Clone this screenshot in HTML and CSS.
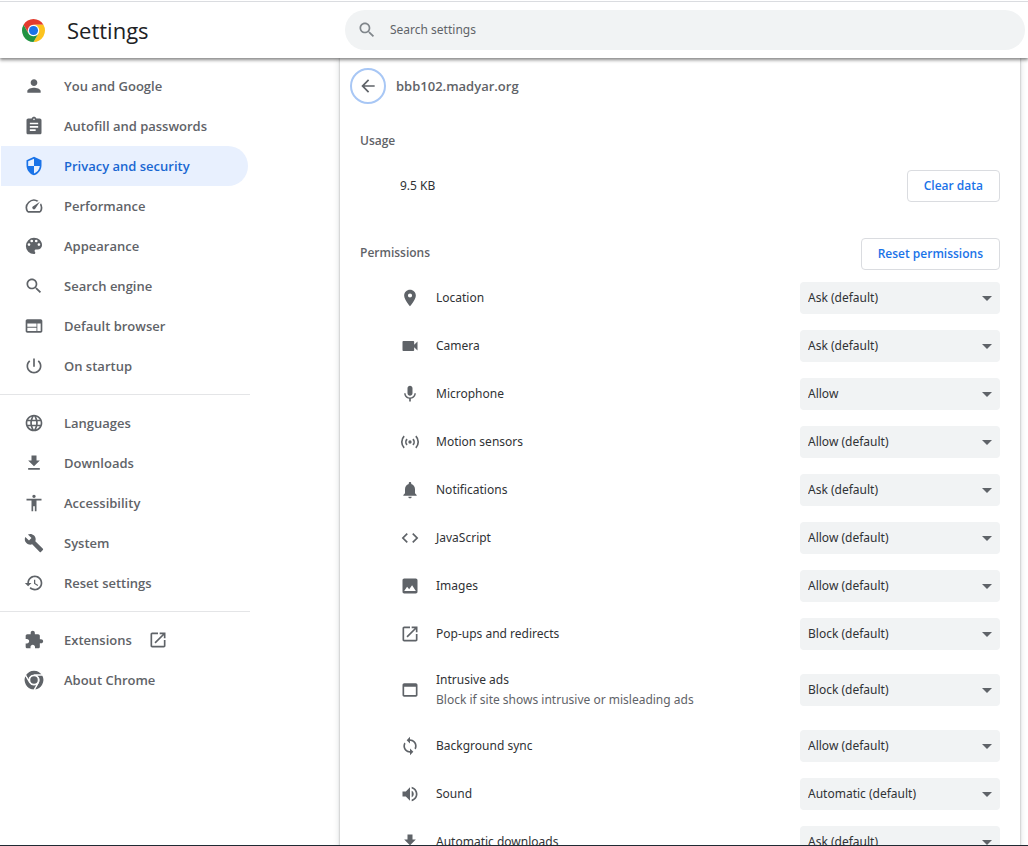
FILE: index.html
```html
<!DOCTYPE html>
<html lang="en">
<head>
<meta charset="utf-8">
<meta name="viewport" content="width=device-width, initial-scale=1">
<title>Settings</title>
<link rel="stylesheet" href="styles.css">
</head>
<body>
<svg class="sprite" aria-hidden="true">
  <symbol id="person" viewBox="0 0 24 24"><path d="M12 12c2.21 0 4-1.79 4-4s-1.79-4-4-4-4 1.79-4 4 1.79 4 4 4zm0 2c-2.67 0-8 1.34-8 4v2h16v-2c0-2.66-5.33-4-8-4z"/></symbol>
  <symbol id="clipboard" viewBox="0 0 24 24"><path d="M19 3h-4.18C14.4 1.84 13.3 1 12 1c-1.3 0-2.4.84-2.82 2H5c-1.1 0-2 .9-2 2v15c0 1.1.9 2 2 2h14c1.1 0 2-.9 2-2V5c0-1.1-.9-2-2-2zm-7 0c.55 0 1 .45 1 1s-.45 1-1 1-1-.45-1-1 .45-1 1-1zm2 15H7v-2h7v2zm3-4H7v-2h10v2zm0-4H7V8h10v2z"/></symbol>
  <symbol id="shield" viewBox="0 0 24 24"><path d="M12 1L3 5v6c0 5.55 3.84 10.74 9 12 5.16-1.26 9-6.45 9-12V5l-9-4zm0 10.99h7c-.53 4.12-3.28 7.79-7 8.94V12H5V6.3l7-3.11v8.8z"/></symbol>
  <symbol id="speed" viewBox="0 0 24 24"><path d="M20.38 8.57l-1.23 1.85a8 8 0 0 1-.22 7.58H5.07A8 8 0 0 1 15.58 6.85l1.85-1.23A10 10 0 0 0 3.35 19a2 2 0 0 0 1.72 1h13.85a2 2 0 0 0 1.74-1 10 10 0 0 0-.27-10.44zm-9.79 6.84a2 2 0 0 0 2.83 0l5.66-8.49-8.49 5.66a2 2 0 0 0 0 2.83z"/></symbol>
  <symbol id="palette" viewBox="0 0 24 24"><path d="M12 3c5 0 9 3.600 9 8 0 2.760-2.240 5-5 5h-1.800c-.800 0-1.500.700-1.500 1.500 0 .400.200.800.500 1.100.200.300.300.600.300 1 0 .800-.700 1.400-1.500 1.400a9 9 0 0 1 0-18zm-5.500 9a1.500 1.500 0 1 0 0-3 1.500 1.500 0 0 0 0 3zm3-4a1.500 1.500 0 1 0 0-3 1.500 1.500 0 0 0 0 3zm5 0a1.500 1.500 0 1 0 0-3 1.500 1.500 0 0 0 0 3zm3 4a1.500 1.500 0 1 0 0-3 1.500 1.500 0 0 0 0 3z" transform="translate(-1 -1) scale(1.08)"/></symbol>
  <symbol id="search" viewBox="0 0 24 24"><path d="M15.5 14h-.79l-.28-.27C15.41 12.59 16 11.11 16 9.5 16 5.91 13.09 3 9.5 3S3 5.91 3 9.5 5.91 16 9.5 16c1.61 0 3.09-.59 4.23-1.57l.27.28v.79l5 4.99L20.49 19l-4.99-5zm-6 0C7.01 14 5 11.99 5 9.5S7.01 5 9.5 5 14 7.01 14 9.5 11.99 14 9.5 14z"/></symbol>
  <symbol id="browser" viewBox="0 0 24 24"><path d="M20 4H4c-1.1 0-1.99.9-1.99 2L2 18c0 1.1.9 2 2 2h16c1.1 0 2-.9 2-2V6c0-1.1-.9-2-2-2zm-5 14H4v-4h11v4zm0-5H4V9h11v4zm5 5h-4V9h4v9z"/></symbol>
  <symbol id="power" viewBox="0 0 24 24"><path d="M13 3h-2v10h2V3zm4.83 2.17l-1.42 1.42C17.99 7.86 19 9.81 19 12c0 3.87-3.13 7-7 7s-7-3.13-7-7c0-2.19 1.01-4.14 2.58-5.42L6.170 5.17C4.23 6.82 3 9.26 3 12c0 4.97 4.03 9 9 9s9-4.03 9-9c0-2.74-1.23-5.18-3.17-6.83z"/></symbol>
  <symbol id="globe" viewBox="0 0 24 24"><path d="M11.99 2C6.47 2 2 6.48 2 12s4.47 10 9.99 10C17.52 22 22 17.52 22 12S17.52 2 11.99 2zm6.930 6h-2.950c-.32-1.250-.78-2.450-1.380-3.560 1.840.63 3.370 1.910 4.330 3.560zM12 4.040c.83 1.200 1.480 2.530 1.910 3.960h-3.820c.43-1.430 1.080-2.760 1.910-3.960zM4.260 14C4.100 13.360 4 12.690 4 12s.1-1.360.26-2h3.380c-.08.66-.14 1.320-.14 2s.06 1.340.14 2H4.260zm.82 2h2.950c.32 1.250.78 2.450 1.380 3.560-1.840-.63-3.370-1.900-4.330-3.560zm2.950-8H5.080c.96-1.660 2.490-2.930 4.330-3.560C8.810 5.550 8.350 6.750 8.030 8zM12 19.960c-.83-1.200-1.480-2.530-1.910-3.960h3.820c-.43 1.430-1.080 2.760-1.910 3.960zM14.340 14H9.660c-.09-.66-.16-1.320-.16-2s.07-1.350.16-2h4.680c.09.65.16 1.320.16 2s-.07 1.340-.16 2zm.25 5.560c.6-1.110 1.060-2.310 1.380-3.560h2.950c-.96 1.650-2.490 2.930-4.330 3.560zM16.360 14c.08-.66.14-1.320.14-2s-.06-1.340-.14-2h3.380c.16.64.26 1.310.26 2s-.1 1.360-.26 2h-3.380z"/></symbol>
  <symbol id="download" viewBox="0 0 24 24"><path d="M19 9h-4V3H9v6H5l7 7 7-7zM5 18v2h14v-2H5z"/></symbol>
  <symbol id="accessibility" viewBox="0 0 24 24"><path d="M12 2c1.100 0 2 .9 2 2s-.9 2-2 2-2-.9-2-2 .9-2 2-2zm9 7h-6v13h-2v-6h-2v6H9V9H3V7h18v2z"/></symbol>
  <symbol id="wrench" viewBox="0 0 24 24"><path d="M22.700 19l-9.100-9.100c.9-2.300.4-5-1.500-6.900-2-2-5-2.400-7.400-1.300L9 6 6 9 1.600 4.700C.4 7.100.9 10.100 2.900 12.100c1.900 1.900 4.600 2.400 6.900 1.500l9.100 9.100c.4.4 1 .4 1.400 0l2.300-2.300c.5-.4.5-1.100.1-1.400z"/></symbol>
  <symbol id="history" viewBox="0 0 24 24"><path d="M13 3c-4.970 0-9 4.030-9 9H1l3.890 3.890.07.14L9 12H6c0-3.870 3.130-7 7-7s7 3.130 7 7-3.130 7-7 7c-1.930 0-3.680-.79-4.940-2.060l-1.420 1.420C8.270 19.990 10.510 21 13 21c4.970 0 9-4.030 9-9s-4.030-9-9-9zm-1 5v5l4.280 2.540.72-1.210-3.500-2.080V8H12z"/></symbol>
  <symbol id="puzzle" viewBox="0 0 24 24"><path d="M20.500 11H19V7c0-1.100-.9-2-2-2h-4V3.500C13 2.120 11.880 1 10.500 1S8 2.120 8 3.500V5H4c-1.100 0-1.990.9-1.990 2v3.800H3.500c1.490 0 2.700 1.210 2.700 2.700s-1.210 2.700-2.700 2.700H2V20c0 1.100.9 2 2 2h3.800v-1.500c0-1.490 1.210-2.700 2.700-2.700 1.490 0 2.700 1.210 2.700 2.700V22H17c1.100 0 2-.9 2-2v-4h1.500c1.380 0 2.500-1.120 2.500-2.500S21.880 11 20.500 11z"/></symbol>
  <symbol id="open" viewBox="0 0 24 24"><path d="M19 19H5V5h7V3H5c-1.110 0-2 .9-2 2v14c0 1.100.89 2 2 2h14c1.100 0 2-.9 2-2v-7h-2v7zM14 3v2h3.590l-9.830 9.830 1.410 1.410L19 6.410V10h2V3h-7z"/></symbol>
  <symbol id="chrome" viewBox="0 0 48 48"><g stroke="#fff" stroke-width="3"><path d="M24 12h20.780a24 24 0 0 0-41.560 0L13.610 30A12 12 0 0 1 24 12z"/><path d="M34.390 30 24 48A24 24 0 0 0 44.780 12H24a12 12 0 0 1 10.390 18z"/><path d="M13.610 30 3.220 12A24 24 0 0 0 24 48l10.390-18a12 12 0 0 1-20.780 0z"/></g><circle cx="24" cy="24" r="9"/></symbol>
  <symbol id="pin" viewBox="0 0 24 24"><path d="M12 2C8.130 2 5 5.130 5 9c0 5.250 7 13 7 13s7-7.750 7-13c0-3.870-3.130-7-7-7zm0 9.500a2.500 2.500 0 0 1 0-5 2.500 2.500 0 0 1 0 5z"/></symbol>
  <symbol id="camera" viewBox="0 0 24 24"><path d="M17 10.500V7c0-.55-.45-1-1-1H4c-.55 0-1 .45-1 1v10c0 .55.45 1 1 1h12c.55 0 1-.45 1-1v-3.500l4 4v-11l-4 4z"/></symbol>
  <symbol id="mic" viewBox="0 0 24 24"><path d="M12 14c1.660 0 2.990-1.340 2.990-3L15 5c0-1.660-1.340-3-3-3S9 3.340 9 5v6c0 1.660 1.340 3 3 3zm5.300-3c0 3-2.540 5.100-5.300 5.100S6.700 14 6.700 11H5c0 3.410 2.720 6.230 6 6.720V21h2v-3.280c3.280-.48 6-3.300 6-6.720h-1.700z"/></symbol>
  <symbol id="sensors" viewBox="0 0 24 24"><circle cx="12" cy="12" r="2"/><path fill="none" stroke="currentColor" stroke-width="2" d="M8.500 8.500a5 5 0 0 0 0 7M15.500 8.500a5 5 0 0 1 0 7M5 5a10 10 0 0 0 0 14M19 5a10 10 0 0 1 0 14"/></symbol>
  <symbol id="bell" viewBox="0 0 24 24"><path d="M12 22c1.100 0 2-.9 2-2h-4c0 1.100.89 2 2 2zm6-6v-5c0-3.070-1.640-5.640-4.500-6.320V4c0-.83-.67-1.500-1.500-1.500s-1.500.67-1.500 1.500v.68C7.630 5.360 6 7.920 6 11v5l-2 2v1h16v-1l-2-2z"/></symbol>
  <symbol id="code" viewBox="0 0 24 24"><path d="M9.400 16.600L4.800 12l4.600-4.600L8 6l-6 6 6 6 1.400-1.400zm5.200 0l4.600-4.600-4.600-4.600L16 6l6 6-6 6-1.400-1.400z"/></symbol>
  <symbol id="image" viewBox="0 0 24 24"><path d="M21 19V5c0-1.100-.9-2-2-2H5c-1.100 0-2 .9-2 2v14c0 1.100.9 2 2 2h14c1.100 0 2-.9 2-2zM5 18l3.500-5 2.500 3 3.500-5 4.500 7z"/></symbol>
  <symbol id="window" viewBox="0 0 24 24"><path d="M19 4H5c-1.110 0-2 .9-2 2v12c0 1.100.89 2 2 2h14c1.100 0 2-.9 2-2V6c0-1.100-.9-2-2-2zm0 14H5V8h14v10z"/></symbol>
  <symbol id="sync" viewBox="0 0 24 24"><path d="M12 4V1L8 5l4 4V6c3.310 0 6 2.690 6 6 0 1.010-.25 1.970-.7 2.800l1.460 1.460C19.540 15.030 20 13.570 20 12c0-4.420-3.580-8-8-8zm0 14c-3.310 0-6-2.690-6-6 0-1.010.25-1.970.7-2.800L5.240 7.740C4.460 8.970 4 10.430 4 12c0 4.420 3.580 8 8 8v3l4-4-4-4v3z"/></symbol>
  <symbol id="sound" viewBox="0 0 24 24"><path d="M3 9v6h4l5 5V4L7 9H3zm13.500 3c0-1.770-1.020-3.290-2.500-4.030v8.050c1.480-.73 2.500-2.250 2.500-4.020zM14 3.230v2.060c2.890.86 5 3.540 5 6.710s-2.110 5.850-5 6.710v2.060c4.010-.91 7-4.490 7-8.770s-2.990-7.860-7-8.770z"/></symbol>
  <symbol id="back" viewBox="0 0 24 24"><path d="M20 11H7.830l5.590-5.590L12 4l-8 8 8 8 1.410-1.410L7.830 13H20v-2z"/></symbol>
  <symbol id="arrow" viewBox="0 0 10 5"><path d="M0 0h10L5 5z"/></symbol>
</svg>

<header class="toolbar">
  <div class="brand">
    <svg class="logo" viewBox="0 0 48 48" aria-hidden="true"><circle cx="24" cy="24" r="13" fill="#fff"/><path fill="#e33b2e" d="M24 12h20.780a24 24 0 0 0-41.560 0L13.610 30A12 12 0 0 1 24 12z"/><path fill="#fcc31e" d="M34.390 30 24 48A24 24 0 0 0 44.780 12H24a12 12 0 0 1 10.390 18z"/><path fill="#229342" d="M13.610 30 3.220 12A24 24 0 0 0 24 48l10.390-18a12 12 0 0 1-20.780 0z"/><circle cx="24" cy="24" r="9.500" fill="#1a73e8"/></svg>
    <h1 class="title">Settings</h1>
  </div>
  <label class="search">
    <svg class="icon"><use href="#search"/></svg>
    <input class="search-input" type="search" placeholder="Search settings" aria-label="Search settings">
  </label>
</header>

<div class="page">
  <nav class="menu" aria-label="Settings sections">
    <a class="menu-item" href="#people"><svg class="icon"><use href="#person"/></svg>You and Google</a>
    <a class="menu-item" href="#autofill"><svg class="icon"><use href="#clipboard"/></svg>Autofill and passwords</a>
    <a class="menu-item selected" href="#privacy" aria-current="page"><svg class="icon"><use href="#shield"/></svg>Privacy and security</a>
    <a class="menu-item" href="#performance"><svg class="icon"><use href="#speed"/></svg>Performance</a>
    <a class="menu-item" href="#appearance"><svg class="icon"><use href="#palette"/></svg>Appearance</a>
    <a class="menu-item" href="#engine"><svg class="icon"><use href="#search"/></svg>Search engine</a>
    <a class="menu-item" href="#default"><svg class="icon"><use href="#browser"/></svg>Default browser</a>
    <a class="menu-item" href="#startup"><svg class="icon"><use href="#power"/></svg>On startup</a>
    <hr class="divider">
    <a class="menu-item" href="#languages"><svg class="icon"><use href="#globe"/></svg>Languages</a>
    <a class="menu-item" href="#downloads"><svg class="icon"><use href="#download"/></svg>Downloads</a>
    <a class="menu-item" href="#a11y"><svg class="icon"><use href="#accessibility"/></svg>Accessibility</a>
    <a class="menu-item" href="#system"><svg class="icon"><use href="#wrench"/></svg>System</a>
    <a class="menu-item" href="#reset"><svg class="icon"><use href="#history"/></svg>Reset settings</a>
    <hr class="divider">
    <a class="menu-item" href="#extensions"><svg class="icon"><use href="#puzzle"/></svg>Extensions<svg class="icon external"><use href="#open"/></svg></a>
    <a class="menu-item" href="#about"><svg class="icon"><use href="#chrome"/></svg>About Chrome</a>
  </nav>

  <main class="card">
    <div class="site">
      <button class="back" type="button" aria-label="Back"><svg class="icon"><use href="#back"/></svg></button>
      <h2 class="site-name">bbb102.madyar.org</h2>
    </div>
    <h3 class="section-title usage-title">Usage</h3>
    <div class="usage"><span>9.5 KB</span><button class="button" type="button">Clear data</button></div>
    <div class="permissions-head"><h3 class="section-title">Permissions</h3><button class="button" type="button">Reset permissions</button></div>

    <div class="row"><svg class="icon"><use href="#pin"/></svg><label class="name" for="p1">Location</label><span class="picker"><select class="select" id="p1"><option>Ask (default)</option></select><svg class="arrow"><use href="#arrow"/></svg></span></div>
    <div class="row"><svg class="icon"><use href="#camera"/></svg><label class="name" for="p2">Camera</label><span class="picker"><select class="select" id="p2"><option>Ask (default)</option></select><svg class="arrow"><use href="#arrow"/></svg></span></div>
    <div class="row"><svg class="icon"><use href="#mic"/></svg><label class="name" for="p3">Microphone</label><span class="picker"><select class="select" id="p3"><option>Allow</option></select><svg class="arrow"><use href="#arrow"/></svg></span></div>
    <div class="row"><svg class="icon"><use href="#sensors"/></svg><label class="name" for="p4">Motion sensors</label><span class="picker"><select class="select" id="p4"><option>Allow (default)</option></select><svg class="arrow"><use href="#arrow"/></svg></span></div>
    <div class="row"><svg class="icon"><use href="#bell"/></svg><label class="name" for="p5">Notifications</label><span class="picker"><select class="select" id="p5"><option>Ask (default)</option></select><svg class="arrow"><use href="#arrow"/></svg></span></div>
    <div class="row"><svg class="icon"><use href="#code"/></svg><label class="name" for="p6">JavaScript</label><span class="picker"><select class="select" id="p6"><option>Allow (default)</option></select><svg class="arrow"><use href="#arrow"/></svg></span></div>
    <div class="row"><svg class="icon"><use href="#image"/></svg><label class="name" for="p7">Images</label><span class="picker"><select class="select" id="p7"><option>Allow (default)</option></select><svg class="arrow"><use href="#arrow"/></svg></span></div>
    <div class="row"><svg class="icon"><use href="#open"/></svg><label class="name" for="p8">Pop-ups and redirects</label><span class="picker"><select class="select" id="p8"><option>Block (default)</option></select><svg class="arrow"><use href="#arrow"/></svg></span></div>
    <div class="row two-line"><svg class="icon"><use href="#window"/></svg><label class="name" for="p9">Intrusive ads<span class="hint">Block if site shows intrusive or misleading ads</span></label><span class="picker"><select class="select" id="p9"><option>Block (default)</option></select><svg class="arrow"><use href="#arrow"/></svg></span></div>
    <div class="row"><svg class="icon"><use href="#sync"/></svg><label class="name" for="p10">Background sync</label><span class="picker"><select class="select" id="p10"><option>Allow (default)</option></select><svg class="arrow"><use href="#arrow"/></svg></span></div>
    <div class="row"><svg class="icon"><use href="#sound"/></svg><label class="name" for="p11">Sound</label><span class="picker"><select class="select" id="p11"><option>Automatic (default)</option></select><svg class="arrow"><use href="#arrow"/></svg></span></div>
    <div class="row"><svg class="icon"><use href="#download"/></svg><label class="name" for="p12">Automatic downloads</label><span class="picker"><select class="select" id="p12"><option>Ask (default)</option></select><svg class="arrow"><use href="#arrow"/></svg></span></div>
  </main>
</div>
</body>
</html>
```
FILE: styles.css
```css
* { box-sizing: border-box; }

body {
  margin: 0;
  height: 100vh;
  display: flex;
  flex-direction: column;
  overflow: hidden;
  border-bottom: 1px solid #202a33;
  background: #fff;
  color: #303235;
  font: 12px/20px "Noto Sans", "Open Sans", sans-serif;
}

.sprite { display: none; }

h1, h2, h3 { margin: 0; }

button, input, select { font: inherit; color: inherit; }

.icon {
  width: 20px;
  height: 20px;
  flex: none;
  color: #5f6368;
  fill: currentColor;
}

.toolbar {
  display: flex;
  align-items: center;
  flex: none;
  height: 58px;
  padding: 2px 3px 0 22px;
  position: relative;
  z-index: 1;
  background: linear-gradient(#fff 1px, #dadce0 1px, #dadce0 2px, #fff 2px);
  box-shadow: 0 1px 3px rgb(0 0 0 / 40%), 0 3px 3px rgb(0 0 0 / 20%);
}

.brand {
  display: flex;
  align-items: center;
  gap: 22px;
  width: 323px;
  flex: none;
}

.logo { width: 23px; height: 23px; }

.title {
  color: #202124;
  font-family: "Open Sans", "Noto Sans", sans-serif;
  font-size: 22px;
  font-weight: 500;
  line-height: 32px;
}

.search {
  display: flex;
  align-items: center;
  flex: 1;
  max-width: 680px;
  height: 40px;
  padding: 0 12px;
  gap: 13px;
  border-radius: 20px;
  background: #f1f3f4;
}

.search .icon { color: #80868b; }

.search-input {
  flex: 1;
  min-width: 0;
  padding: 0;
  border: 0;
  outline: 0;
  background: none;
}

.search-input::placeholder { color: #5f6368; opacity: 1; }

.page {
  display: flex;
  flex: 1;
  min-height: 0;
  overflow: hidden;
}

.menu {
  width: 340px;
  flex: none;
  padding: 8px 90px 0 1px;
}

.menu-item, .site-name, .section-title, .button {
  font-family: "Open Sans", "Noto Sans", sans-serif;
  font-weight: 600;
}

.menu-item {
  display: flex;
  align-items: center;
  gap: 20px;
  height: 40px;
  margin-right: 2px;
  padding-left: 23px;
  border-radius: 0 20px 20px 0;
  color: #5f6368;
  font-size: 13px;
  text-decoration: none;
}

.selected { background: #e8f0fe; color: #1967d2; }
.selected .icon { color: #1a73e8; }
.external { margin-left: -4px; }

.divider {
  height: 1px;
  margin: 8px 0 8px -1px;
  border: 0;
  background: #e4e5e7;
}

.card {
  flex: 1;
  max-width: 680px;
  height: max-content;
  margin-right: 8px;
  padding: 10px 20px 20px;
  box-shadow: 0 0 2px rgb(60 64 67 / 40%), 0 0 6px 1px rgb(60 64 67 / 15%);
}

.site {
  display: flex;
  align-items: center;
  gap: 10px;
  margin-left: -10px;
}

.back {
  display: grid;
  place-items: center;
  width: 36px;
  height: 36px;
  padding: 0;
  border: 2px solid #a8c7f5;
  border-radius: 50%;
  background: #fff;
}

.site-name {
  color: #5f6368;
  font-size: 13px;
}

.section-title {
  color: #5f6368;
  font-size: 12px;
  line-height: 30px;
}

.usage-title { margin-top: 22px; }

.usage, .permissions-head {
  display: flex;
  justify-content: space-between;
}

.usage {
  align-items: center;
  height: 48px;
  margin-top: 6px;
  padding-left: 40px;
}

.permissions-head { margin: 28px 0 4px; }

.button {
  height: 32px;
  padding: 0 16px;
  border: 1px solid #dadce0;
  border-radius: 4px;
  background: #fff;
  color: #1a73e8;
}

.row {
  display: flex;
  align-items: center;
  gap: 16px;
  min-height: 48px;
  padding-left: 40px;
}

.two-line { min-height: 64px; }

.name { flex: 1; }
.hint { display: block; color: #5f6368; }

.picker {
  display: grid;
  align-items: center;
  width: 200px;
}

.select, .arrow { grid-area: 1 / 1; }

.select {
  appearance: none;
  width: 100%;
  height: 32px;
  padding: 0 24px 0 8px;
  border: 0;
  border-radius: 4px;
  background: #f1f3f4;
}

.arrow {
  width: 10px;
  height: 5px;
  margin-right: 8px;
  justify-self: end;
  fill: #5f6368;
  pointer-events: none;
}
```
